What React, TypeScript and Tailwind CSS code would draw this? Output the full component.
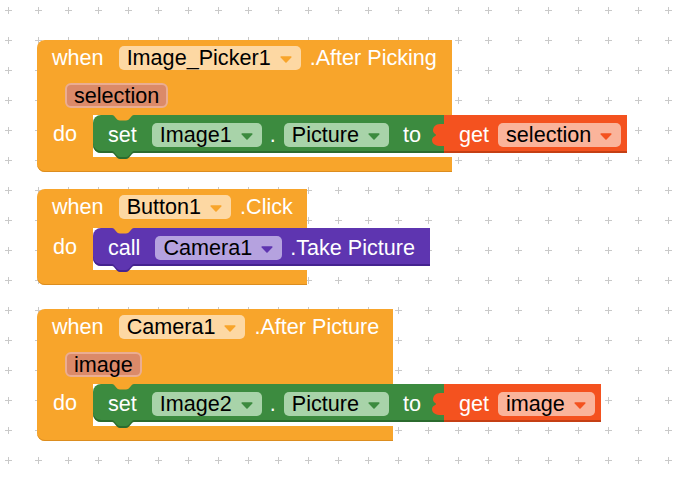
import React from "react";

const ORANGE = "#f8a52b";

function Arrow({ color }: { color: string }) {
  return (
    <svg width="12" height="7" viewBox="0 0 12 7" className="mt-[2px] shrink-0">
      <path d="M1.2 1 H10.8 L6 6 Z" fill={color} stroke={color} strokeWidth="1.6" strokeLinejoin="round" />
    </svg>
  );
}

function Pill({ label, bg, arrow }: { label: string; bg: string; arrow: string }) {
  return (
    <div className={`flex h-[24px] items-center gap-[9px] rounded-[5px] pl-[8px] pr-[9px] text-black ${bg}`}>
      <span>{label}</span>
      <Arrow color={arrow} />
    </div>
  );
}

function ParamPill({ label }: { label: string }) {
  return (
    <div className="flex h-[25px] items-center rounded-[6px] border-2 border-[#ebad92] bg-[#db8a69] px-[7px] text-black">
      {label}
    </div>
  );
}

function TopNotch() {
  return (
    <svg className="absolute left-[19px] top-0" width="22" height="6" viewBox="0 0 22 6">
      <path d="M0 0 C3 0 4 5.5 8 5.5 H14 C18 5.5 19 0 22 0 Z" fill={ORANGE} />
    </svg>
  );
}

function BottomBump({ main, dark }: { main: string; dark: string }) {
  return (
    <svg className="absolute bottom-[-6px] left-[19px]" width="22" height="8" viewBox="0 0 22 8">
      <path d="M0 2 H22 C19 2 18 8 14 8 H8 C4 8 3 2 0 2 Z" fill={dark} />
      <path d="M0 0 H22 C19 0 18 6 14 6 H8 C4 6 3 0 0 0 Z" fill={main} />
    </svg>
  );
}

function GetBlock({ name }: { name: string }) {
  return (
    <div className="relative flex h-[38px] items-center bg-[#f4521f] pl-[15px] pr-[6px] pt-[2px] text-white shadow-[inset_0_-2px_0_#c53f14]">
      <svg className="absolute left-[-12px] top-[9px]" width="13" height="22" viewBox="0 0 13 22">
        <path d="M13 0 H8 C3.5 0 1 3 1 7 C1 9 4 10 4 11 C4 12 0 13 0 16 C0 20 4 22 9 22 H13 Z" fill="#f4521f" />
      </svg>
      <span>get</span>
      <div className="ml-[9px]">
        <Pill label={name} bg="bg-[#fab49b]" arrow="#f4521f" />
      </div>
    </div>
  );
}

function SetBlock({ comp, value }: { comp: string; value: string }) {
  return (
    <div className="relative z-10 flex h-[38px]">
      <div className="relative flex w-[351px] items-center rounded-l-[8px] bg-[#3c8b3f] pl-[15px] pt-[2px] text-white shadow-[inset_0_-2px_0_#2b6b2e]">
        <TopNotch />
        <BottomBump main="#3c8b3f" dark="#2b6b2e" />
        <span>set</span>
        <div className="ml-[15px]">
          <Pill label={comp} bg="bg-[#a8d3a9]" arrow="#3c8b3f" />
        </div>
        <span className="ml-[8px]">.</span>
        <div className="ml-[8px]">
          <Pill label="Picture" bg="bg-[#a8d3a9]" arrow="#3c8b3f" />
        </div>
        <span className="ml-[14px]">to</span>
      </div>
      <GetBlock name={value} />
    </div>
  );
}

function CallBlock() {
  return (
    <div className="relative z-10 flex h-[38px] w-[337px] items-center rounded-l-[8px] bg-[#5e35b0] pl-[15px] pt-[2px] text-white shadow-[inset_0_-2px_0_#452390]">
      <TopNotch />
      <BottomBump main="#5e35b0" dark="#452390" />
      <span>call</span>
      <div className="ml-[15px]">
        <Pill label="Camera1" bg="bg-[#b5a2df]" arrow="#5e35b0" />
      </div>
      <span className="ml-[8px]">.Take Picture</span>
    </div>
  );
}

function EventBlock({
  pos,
  width,
  comp,
  event,
  param,
  children,
}: {
  pos: string;
  width: string;
  comp: string;
  event: string;
  param?: string;
  children: React.ReactNode;
}) {
  return (
    <div className={`absolute flex flex-col ${pos} ${width}`}>
      <div className={`rounded-tl-[8px] bg-[#f8a52b] pt-[6px] ${param ? "pb-[7px]" : "pb-[9px]"}`}>
        <div className="flex h-[24px] items-center pl-[15px] text-white">
          <span>when</span>
          <div className="ml-[15px]">
            <Pill label={comp} bg="bg-[#fdd8a3]" arrow={ORANGE} />
          </div>
          <span className="ml-[9px]">{event}</span>
        </div>
        {param && (
          <div className="mt-[13px] flex pl-[28px]">
            <ParamPill label={param} />
          </div>
        )}
      </div>
      <div className="flex">
        <div className="w-[56px] shrink-0 bg-[#f8a52b] pl-[16px]">
          <div className="flex h-[38px] items-center text-white">do</div>
        </div>
        <div className="shrink-0 pb-[4px]">{children}</div>
      </div>
      <div className="h-[15px] rounded-bl-[8px] bg-[#f8a52b] shadow-[inset_0_-1px_0_#dc8d1f]" />
    </div>
  );
}

export default function App() {
  return (
    <div className="relative h-[477px] w-[690px] overflow-hidden bg-white font-['Liberation_Sans','Arial',sans-serif] text-[21.6px] leading-none">
      <svg className="absolute inset-0" width="690" height="477">
        <defs>
          <pattern id="grid" x="-7" y="-5" width="30" height="30" patternUnits="userSpaceOnUse">
            <rect x="12" y="15" width="7" height="1" fill="#c9c9c9" />
            <rect x="15" y="12" width="1" height="7" fill="#c9c9c9" />
          </pattern>
        </defs>
        <rect width="690" height="477" fill="url(#grid)" />
      </svg>

      <EventBlock pos="left-[37px] top-[40px]" width="w-[415px]" comp="Image_Picker1" event=".After Picking" param="selection">
        <SetBlock comp="Image1" value="selection" />
      </EventBlock>

      <EventBlock pos="left-[37px] top-[189px]" width="w-[270px]" comp="Button1" event=".Click">
        <CallBlock />
      </EventBlock>

      <EventBlock pos="left-[37px] top-[309px]" width="w-[356px]" comp="Camera1" event=".After Picture" param="image">
        <SetBlock comp="Image2" value="image" />
      </EventBlock>
    </div>
  );
}
